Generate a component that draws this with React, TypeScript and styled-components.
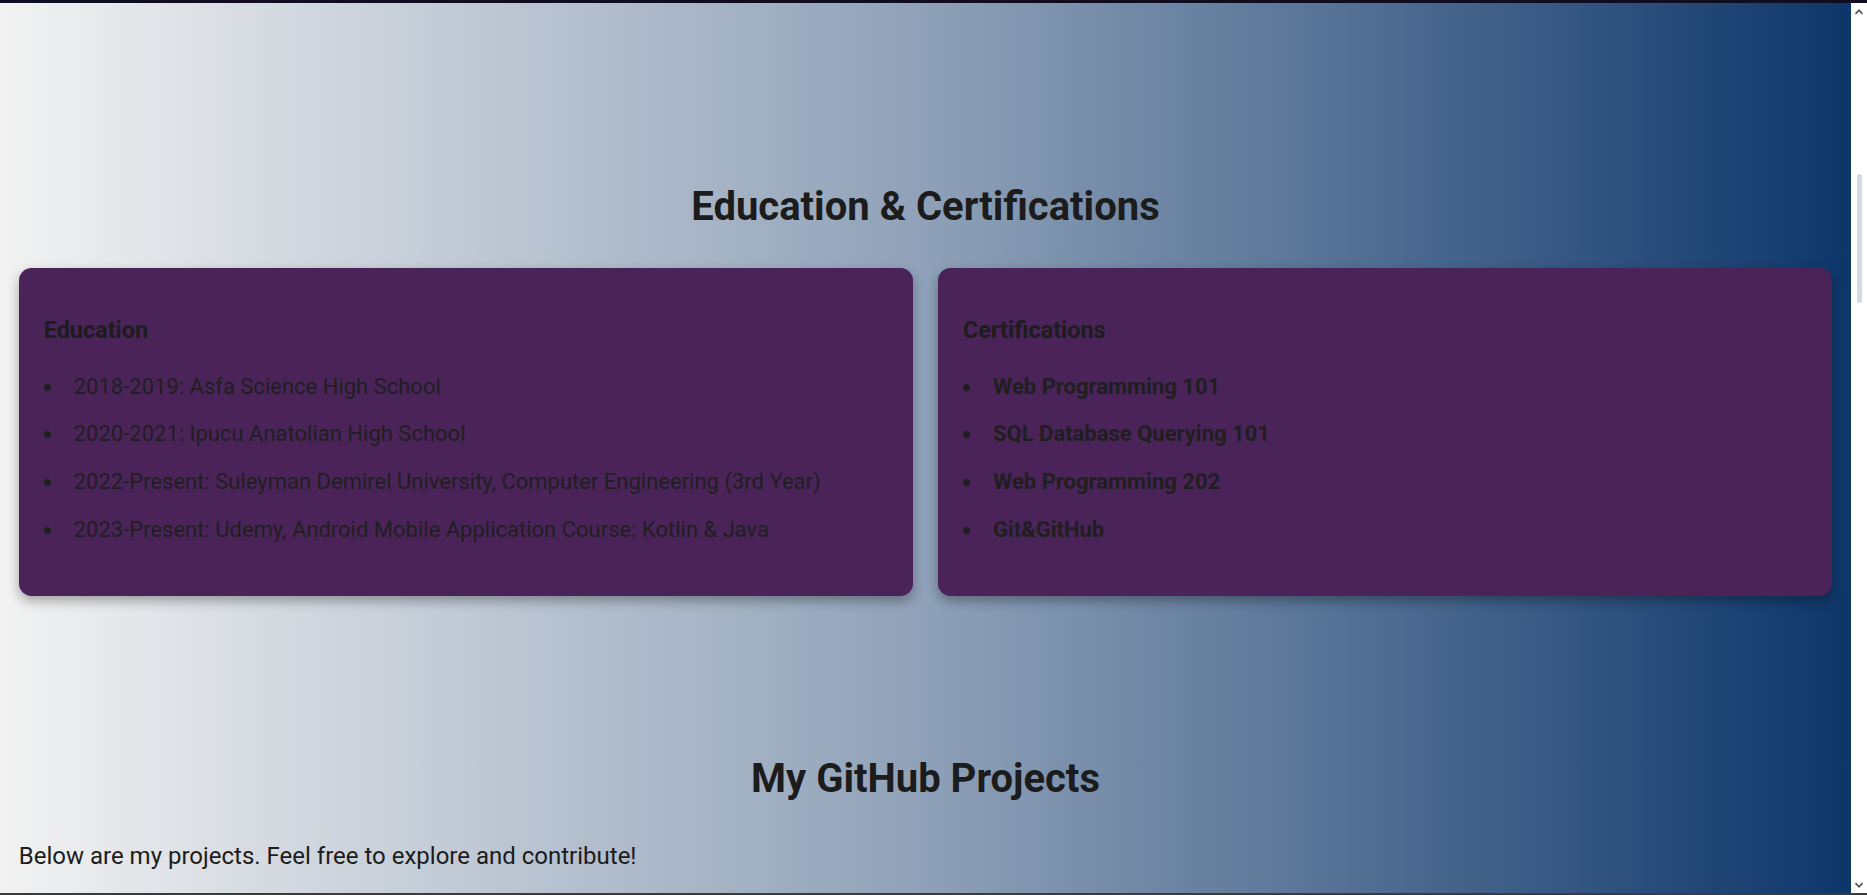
import * as React from 'react';
import styled, { createGlobalStyle } from 'styled-components';

const GlobalStyle = createGlobalStyle`
  html, body {
    margin: 0;
    padding: 0;
    height: 100%;
    overflow: hidden;
  }

  body {
    font-family: Roboto, 'Noto Sans', 'Liberation Sans', sans-serif;
    color: #1f1f1f;
  }
`;

const Frame = styled.div`
  height: 100vh;
  display: flex;
  flex-direction: column;
`;

const WindowEdge = styled.div<{ $size: number; $color: string }>`
  flex: 0 0 ${p => p.$size}px;
  background: ${p => p.$color};
`;

const Viewport = styled.div`
  flex: 1;
  min-height: 0;
  display: flex;
`;

const Page = styled.main`
  flex: 1;
  min-width: 0;
  overflow: hidden;
  background: linear-gradient(to right, #f2f2f2 0%, #8fa1b8 50%, #0d366a 100%);
  padding: 0 18.75px;
`;

const Section = styled.section<{ $top: number }>`
  padding-top: ${p => p.$top}px;
`;

const SectionTitle = styled.h2`
  margin: 0;
  font-size: 40px;
  line-height: 47px;
  font-weight: 700;
  text-align: center;
  color: #1c1c1c;
`;

const CardGrid = styled.div`
  display: grid;
  grid-template-columns: 1fr 1fr;
  gap: 25px;
  margin-top: 38px;
`;

const Card = styled.div`
  background: #4a2359;
  border-radius: 12.5px;
  padding: 25px;
  box-shadow: 0 5px 12px rgba(0, 0, 0, 0.32);
`;

const CardTitle = styled.h3`
  margin: 23.6px 0 26.8px;
  font-size: 23.4px;
  line-height: 27.4px;
  font-weight: 700;
  color: #1d1d1d;
`;

const ItemList = styled.ul`
  margin: 0 0 25.1px;
  padding-left: 20px;
  display: flex;
  flex-direction: column;
  gap: 15.7px;
`;

const Item = styled.li<{ $strong?: boolean }>`
  padding-left: 10px;
  font-size: 22px;
  line-height: 32px;
  font-weight: ${p => (p.$strong ? 700 : 400)};
  color: #1f1f1f;
`;

const Intro = styled.p`
  margin: 39.6px 0 0;
  font-size: 24px;
  line-height: 28.1px;
  color: #1c1c1c;
`;

const Scrollbar = styled.div`
  flex: 0 0 16px;
  background: #ffffff;
  display: flex;
  flex-direction: column;
  align-items: center;
`;

const ScrollArrow = styled.div`
  flex: 0 0 17px;
  display: flex;
  align-items: center;
  justify-content: center;
`;

const ScrollTrack = styled.div`
  flex: 1;
  display: flex;
  flex-direction: column;
  align-items: center;
`;

const ScrollThumb = styled.div<{ $offset: number; $length: number }>`
  margin-top: ${p => p.$offset}px;
  height: ${p => p.$length}px;
  width: 5px;
  border-radius: 3px;
  background: #d3dce5;
`;

const EDUCATION = [
  '2018-2019: Asfa Science High School',
  '2020-2021: Ipucu Anatolian High School',
  '2022-Present: Suleyman Demirel University, Computer Engineering (3rd Year)',
  '2023-Present: Udemy, Android Mobile Application Course: Kotlin & Java',
];

const CERTIFICATIONS = [
  'Web Programming 101',
  'SQL Database Querying 101',
  'Web Programming 202',
  'Git&GitHub',
];

const Chevron = ({ down }: { down?: boolean }) => (
  <svg width='8' height='6' viewBox='0 0 8 6'>
    <path
      d={down ? 'M0.5 1 L4 4.8 L7.5 1' : 'M0.5 5 L4 1.2 L7.5 5'}
      fill='none'
      stroke='#505050'
      strokeWidth='1.6'
    />
  </svg>
);

const InfoCard = ({ title, items, strong }: { title: string; items: string[]; strong?: boolean }) => (
  <Card>
    <CardTitle>{title}</CardTitle>
    <ItemList>
      {items.map(item => (
        <Item key={item} $strong={strong}>{item}</Item>
      ))}
    </ItemList>
  </Card>
);

export default function App() {
  return (
    <Frame>
      <GlobalStyle />
      <WindowEdge $size={3} $color='#100d20' />
      <Viewport>
        <Page>
          <Section $top={180}>
            <SectionTitle>Education &amp; Certifications</SectionTitle>
            <CardGrid>
              <InfoCard title='Education' items={EDUCATION} />
              <InfoCard title='Certifications' items={CERTIFICATIONS} strong />
            </CardGrid>
          </Section>
          <Section $top={159.2}>
            <SectionTitle>My GitHub Projects</SectionTitle>
            <Intro>Below are my projects. Feel free to explore and contribute!</Intro>
          </Section>
        </Page>
        <Scrollbar>
          <ScrollArrow><Chevron /></ScrollArrow>
          <ScrollTrack>
            <ScrollThumb $offset={154} $length={129} />
          </ScrollTrack>
          <ScrollArrow><Chevron down /></ScrollArrow>
        </Scrollbar>
      </Viewport>
      <WindowEdge $size={2} $color='#3b3b3b' />
    </Frame>
  );
}
